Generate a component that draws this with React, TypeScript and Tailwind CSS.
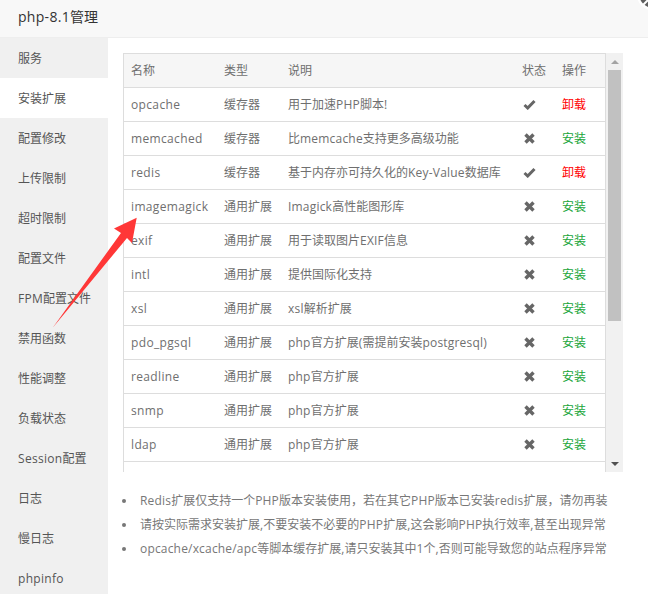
import React from "react";

const nav = ["服务","安装扩展","配置修改","上传限制","超时限制","配置文件","FPM配置文件","禁用函数","性能调整","负载状态","Session配置","日志","慢日志","phpinfo"];

const rows: [string,string,string,boolean][] = [
  ["opcache","缓存器","用于加速PHP脚本!",true],
  ["memcached","缓存器","比memcache支持更多高级功能",false],
  ["redis","缓存器","基于内存亦可持久化的Key-Value数据库",true],
  ["imagemagick","通用扩展","Imagick高性能图形库",false],
  ["exif","通用扩展","用于读取图片EXIF信息",false],
  ["intl","通用扩展","提供国际化支持",false],
  ["xsl","通用扩展","xsl解析扩展",false],
  ["pdo_pgsql","通用扩展","php官方扩展(需提前安装postgresql)",false],
  ["readline","通用扩展","php官方扩展",false],
  ["snmp","通用扩展","php官方扩展",false],
  ["ldap","通用扩展","php官方扩展",false],
];

const notes = [
  "Redis扩展仅支持一个PHP版本安装使用，若在其它PHP版本已安装redis扩展，请勿再装",
  "请按实际需求安装扩展,不要安装不必要的PHP扩展,这会影响PHP执行效率,甚至出现异常",
  "opcache/xcache/apc等脚本缓存扩展,请只安装其中1个,否则可能导致您的站点程序异常",
];

// Latin runs in the reference are slightly wider than Open Sans; CJK runs keep their exact em width.
const Mixed = ({ text, latin }: { text: string; latin: string }) => (
  <>
    {text.split(/([\x20-\x7e]+)/).map((part, i) =>
      i % 2 === 1 ? <span key={i} className={latin}>{part}</span> : part
    )}
  </>
);

const Check = () => (
  <svg width="13" height="11" viewBox="0 0 13 11" className="ml-px block">
    <path d="M1.5 6 L4.7 9 L11.5 2" fill="none" stroke="#666" strokeWidth="3" />
  </svg>
);
const Cross = () => (
  <svg width="13" height="11" viewBox="0 0 13 11" className="ml-px block">
    <path d="M2.5 1.5 L10.5 9.5 M10.5 1.5 L2.5 9.5" fill="none" stroke="#666" strokeWidth="3.4" />
  </svg>
);

export default function App() {
  return (
    <div className="relative h-[594px] w-[648px] overflow-hidden bg-white font-['Open_Sans','Noto_Sans_CJK_SC',sans-serif] text-xs text-[#6f6f6f]">
      <header className="h-[38px] border-b border-[#eeeeee] bg-[#f8f8f8] pl-[18px] text-sm leading-[34px] text-[#333]">
        <Mixed text="php-8.1管理" latin="tracking-[0.3px]" />
      </header>
      <div className="flex h-[556px]">
        <nav className="w-[108px] shrink-0 bg-[#f0f0f0]">
          {nav.map((n, i) => (
            <div key={n} className={`h-10 whitespace-nowrap pl-[18px] pt-px leading-10 text-[#555] ${i === 1 ? "bg-white" : ""}`}>
              <Mixed text={n} latin="tracking-[0.3px]" />
            </div>
          ))}
        </nav>
        <main className="flex-1 pl-[15px] pt-[15px]">
          <div className="flex h-[419px] w-[500px] overflow-hidden">
            <div className="w-[483px] overflow-hidden border-x border-t border-[#dddddd]">
              <table className="w-full table-fixed border-collapse text-left">
                <colgroup>
                  <col className="w-[93px]" />
                  <col className="w-[64px]" />
                  <col className="w-[234px]" />
                  <col className="w-[40px]" />
                  <col />
                </colgroup>
                <thead>
                  <tr className="h-[33px] border-b border-[#dddddd] bg-[#f6f6f6]">
                    {["名称","类型","说明","状态","操作"].map(h => (
                      <th key={h} className="px-[7px] pt-0.5 font-normal">{h}</th>
                    ))}
                  </tr>
                </thead>
                <tbody>
                  {rows.map(r => (
                    <tr key={r[0]} className="h-[34px] border-b border-[#dddddd]">
                      <td className="whitespace-nowrap px-[7px] pt-0.5 tracking-[0.35px]">{r[0]}</td>
                      <td className="whitespace-nowrap px-[7px] pt-0.5">{r[1]}</td>
                      <td className="whitespace-nowrap px-[7px] pt-0.5">
                        <Mixed text={r[2]} latin="tracking-[0.2px]" />
                      </td>
                      <td className="px-[7px]">{r[3] ? <Check /> : <Cross />}</td>
                      <td className={`px-[7px] pt-0.5 ${r[3] ? "text-[#ff0000]" : "text-[#20a53a]"}`}>{r[3] ? "卸载" : "安装"}</td>
                    </tr>
                  ))}
                </tbody>
              </table>
            </div>
            <div className="flex w-[17px] shrink-0 flex-col items-center bg-[#f1f1f1]">
              <div className="flex h-[17px] w-full items-center justify-center">
                <div className="h-0 w-0 border-x-[4px] border-b-[4px] border-x-transparent border-b-[#a3a3a3]" />
              </div>
              <div className="h-[251px] w-[13px] bg-[#c1c1c1]" />
              <div className="flex-1" />
              <div className="flex h-[17px] w-full items-center justify-center">
                <div className="h-0 w-0 border-x-[4px] border-t-[4px] border-x-transparent border-t-[#505050]" />
              </div>
            </div>
          </div>
          <ul className="mt-[17px] text-[#777]">
            {notes.map(n => (
              <li key={n} className="-ml-px flex items-center gap-3.5 whitespace-nowrap leading-6">
                <span className="h-1 w-1 shrink-0 rounded-full bg-[#777]" />
                <span><Mixed text={n} latin="tracking-[0.18px]" /></span>
              </li>
            ))}
          </ul>
        </main>
      </div>
      <svg className="absolute left-0 top-0" width="648" height="594" viewBox="0 0 648 594">
        <polygon points="136.7,217.7 114,228.5 121,233 52.7,327.7 127,238 132,243" fill="#ff3737" />
      </svg>
      <svg className="absolute right-0 top-0" width="20" height="14" viewBox="0 0 20 14">
        <circle cx="24" cy="-5" r="15" fill="#fff" />
        <circle cx="24" cy="-5" r="12.5" fill="#5f5f5f" />
        <path d="M15 5 L22 -2" stroke="#fff" strokeWidth="2" />
      </svg>
    </div>
  );
}
